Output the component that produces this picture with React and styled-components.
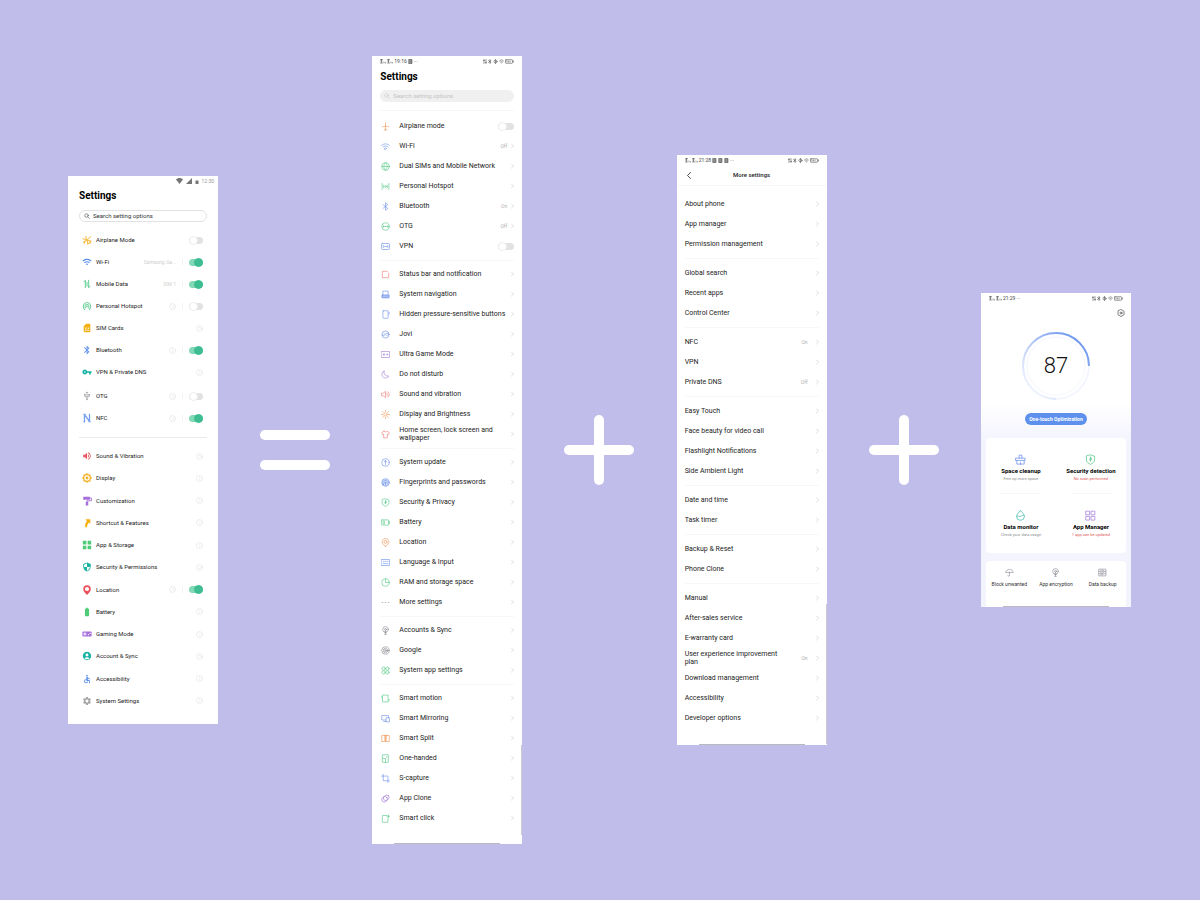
import React from "react";
import styled, { createGlobalStyle } from "styled-components";
import {
  MdWifi, MdSimCard, MdBluetooth, MdVpnKey, MdUsb, MdVolumeUp, MdSecurity,
  MdBatteryFull, MdVideogameAsset, MdAccountCircle, MdAccessible,
  MdWifiTethering,
} from "react-icons/md";

const GlobalStyle = createGlobalStyle`
  * { box-sizing: border-box; }
  body {
    margin: 0;
    background: #c0bdea;
    font-family: Roboto, "Liberation Sans", sans-serif;
    color: #1c1c1c;
  }
  ul { list-style: none; margin: 0; padding: 0; }
  h1, h2, p { margin: 0; }
`;

const c = {
  blue: "#6f94ea",
  green: "#5cc98a",
  red: "#ee7f78",
  orange: "#f0985c",
  purple: "#a683d8",
  grey: "#8f8f99",
  teal: "#45bfae",
};

/* ---------- line icons ---------- */

const shapes = {
  plane: <path d="M12 2v20M3 12.500c3-1.500 15-1.500 18 0M8.500 21h7" />,
  wifi: <path d="M1.500 9C7.500 3.500 16.500 3.500 22.500 9M5.500 13c4-3.500 9-3.500 13 0M9 17c2-1.500 4-1.500 6 0l-3 3z" />,
  globe: <><circle cx="12" cy="12" r="10" /><path d="M2 12h20M12 2c-6 6-6 14 0 20M12 2c6 6 6 14 0 20" /></>,
  hotspot: <><circle cx="12" cy="12" r="2" /><path d="M7.500 8c-1.500 2-1.500 6 0 8M16.500 8c1.500 2 1.500 6 0 8M3 4v16M21 4v16" /></>,
  bluetooth: <path d="M5.500 7L18 17l-6 5V2l6 5L5.500 17" />,
  otg: <><circle cx="12" cy="12" r="10" /><path d="M6 12h12M6 9.500v5M18 9.500v5" /></>,
  vpn: <><rect x="1.500" y="4" width="21" height="16" rx="2" /><path d="M6 9v6M18 9v6M9 12h6" /></>,
  status: <path d="M17 3.500H3.500v17h17V8" />,
  nav: <><path d="M5 13V3h14v10" /><rect x="2" y="13" width="20" height="8" rx="2" fill="currentColor" fillOpacity=".6" /></>,
  buttons: <><rect x="5" y="2" width="14" height="20" rx="1.500" /><path d="M21.500 6v5" /></>,
  jovi: <><circle cx="12" cy="12" r="9.500" /><path d="M3 14c5 2 8-1 9-3s6-3 9-1M8 10h1M15 14h2" /></>,
  game: <><rect x="1.500" y="4" width="21" height="16" /><path d="M8 9v6M6 12h3M14 12h1M17.500 10v4" /></>,
  moon: <path d="M8 3c-1 8 4 14 13 13-4 7-15 7-18-1C1.500 10 4 5 8 3z" />,
  sound: <path d="M2 8.500h4l6-5v17l-6-5H2zM15.500 8c2 2 2 6 0 8M19 5c4 4 4 10 0 14" />,
  sun: <><circle cx="12" cy="12" r="4.500" /><path d="M12 1v3M12 20v3M1 12h3M20 12h3M4 4l2.500 2.500M17.500 17.500L20 20M4 20l2.500-2.500M17.500 6.500L20 4" /></>,
  shirt: <path d="M8 3L2 7l2 5 3-1v10h10V11l3 1 2-5-6-4c-1 3-7 3-8 0z" />,
  update: <><circle cx="12" cy="12" r="10" /><path d="M12 17V7M8.500 10.500L12 7l3.500 3.500" /></>,
  finger: <><circle cx="12" cy="12" r="10" fill="currentColor" fillOpacity=".3" /><path d="M5 11c3-6 11-6 14 0M7 16c0-7 10-7 10 0M12 12v7M5 15l2 3" /></>,
  shield: <path d="M12 2l9 3v8c0 4-4 7.500-9 9.500-5-2-9-5.500-9-9.500V5zM12 7v4h-2l2 5v-4h2z" />,
  battery: <><rect x="1.500" y="5" width="18.500" height="14" rx="1" /><path d="M22.500 9v6M6 8v8M9 8v8" /></>,
  pin: <><path d="M12 22.500C5 18 3 14 3 10.500 3 5 7 1.500 12 1.500s9 3.500 9 9c0 3.500-2 7.500-9 12z" /><circle cx="12" cy="10.500" r="4" /></>,
  keyboard: <><rect x="1.500" y="4" width="21" height="16" /><path d="M6 9h2M11 9h2M16 9h2M6 15h12" /></>,
  pie: <><circle cx="12" cy="12" r="10" /><path d="M12 2v10h10" /></>,
  dots: <path d="M3 12h2M11 12h2M19 12h2" />,
  bulb: <><circle cx="12" cy="9" r="7.500" /><circle cx="12" cy="9" r="2.500" /><path d="M12 12v10M9 16.500h6M9.500 22h5" /></>,
  google: <><circle cx="12" cy="12" r="10" /><circle cx="12" cy="12" r="6" /><path d="M12 12h9M12 9a3 3 0 1 0 3 3" /></>,
  apps: <><circle cx="7" cy="7" r="4.500" /><circle cx="17" cy="7" r="4.500" /><circle cx="7" cy="17" r="4.500" /><circle cx="17" cy="17" r="4.500" /></>,
  motion: <path d="M5 3h14v18H5zM2.500 6v4M21.500 14v4" />,
  mirror: <><path d="M13 16H2V4h18v6" /><rect x="14.500" y="10" width="8" height="11" /><path d="M7 20h6" /></>,
  split: <path d="M9 4H2v16h7zM15 4h7v16h-7zM12 3v18M9 4h6" />,
  onehand: <path d="M4.500 2h15v20h-15zM4.500 12H12v10M14 8h2" />,
  crop: <path d="M6 1v17h17M1 5.500h17.500V23" />,
  clone: <><ellipse cx="9.500" cy="14" rx="8" ry="7" transform="rotate(-40 9.500 14)" /><ellipse cx="14" cy="10" rx="8.500" ry="6.500" transform="rotate(-40 14 10)" /></>,
  click: <path d="M16 4H3.500v18h15V10M16 6h7M20 3v6" />,
  brush: <><path d="M9 9V2.500h6V9M2 9h20v5H2zM4 14v8h16v-8M12 18v4" /></>,
  drop: <><path d="M12 1.500c5 5 8.500 8.500 8.500 12.500a8.500 8.500 0 0 1-17 0C3.500 10 7 6.500 12 1.500z" /><path d="M4 14c3-3 5 2 8 0s5-3 8-1" /></>,
  grid: <path d="M2.500 2.500h7.500v8H2.500zM14 2.500h7.500v8H14zM2.500 14h7.500v8H2.500zM14 14h7.500v8H14z" />,
  umbrella: <path d="M2 11c1-10 19-10 20 0zM12 11v9c0 3-4 3-4 0" />,
  backup: <path d="M3 3h18v18H3zM3 9h18M3 15h18M7 6h8M7 12l4 2 6-4M7 18h6" />,
  gear: <><path d="M12 1.500l9 5.250v10.500L12 22.500l-9-5.250V6.750z" /><circle cx="12" cy="12" r="3" /></>,
  search: <><circle cx="10" cy="10" r="7" /><path d="M15.500 15.500L22 22" /></>,
};

const Svg = styled.svg`
  display: block;
  flex: none;
  fill: none;
  stroke: currentColor;
  stroke-linecap: round;
  stroke-linejoin: round;
`;

const LineIcon = ({ name, color, size = 9, weight = 1.7 }) => (
  <Svg width={size} height={size} viewBox="0 0 24 24" color={color} strokeWidth={weight} aria-hidden="true">
    {shapes[name]}
  </Svg>
);

/* ---------- filled icons that the package lacks ---------- */

const Solid = ({ color, children }) => (
  <Svg width="10" height="10" viewBox="0 0 24 24" color={color} strokeWidth="2.200" aria-hidden="true">
    {children}
  </Svg>
);

const AirplaneSolid = ({ color }) => (
  <Solid color={color}>
    <path d="M9 3l2 7M2 9l8 2M3 17l8-4 10-9M8 14l-3 7M13 12l1 10M13 12l9 3-4 1 3 4-4-1-3 3" />
  </Solid>
);
const DataSolid = ({ color }) => (
  <Solid color={color}><path d="M8 21V3L4.500 7M16 3v18l3.500-4M12 8v9" /></Solid>
);
const NfcSolid = ({ color }) => (
  <Solid color={color}><path strokeWidth="3" d="M6 21V4l12 16V3" /><path strokeWidth="1.500" d="M3 3h6M15 21h6M3 21h3" /></Solid>
);
const SunSolid = ({ color }) => (
  <Solid color={color}>
    <path fill="currentColor" stroke="none" fillRule="evenodd" d="M12 0l3.500 3.200 4.800.5.500 4.800L24 12l-3.200 3.500-.5 4.800-4.800.5L12 24l-3.500-3.200-4.800-.5-.5-4.800L0 12l3.200-3.500.5-4.800 4.800-.5zM12 5.500a6.500 6.500 0 1 0 0 13 6.500 6.500 0 0 0 0-13z" />
    <circle cx="12" cy="12" r="3.500" fill="currentColor" stroke="none" />
  </Solid>
);
const RollerSolid = ({ color }) => (
  <Solid color={color}>
    <path fill="currentColor" stroke="none" d="M3 2h16v7H3zM9 14h6v9H9z" /><path d="M19 5h3.500v6.500H12V15" />
  </Solid>
);
const ShortcutSolid = ({ color }) => (
  <Solid color={color}>
    <path fill="currentColor" stroke="none" d="M8 3h12v11l-3.500-3.500C13 14 12.500 18 12 22H8c-2-6 1-11 4-14z" />
  </Solid>
);
const SquaresSolid = ({ color }) => (
  <Solid color={color}>
    <path fill="currentColor" stroke="none" d="M2 2h8.500v8.500H2zM13.500 2H22v8.500h-8.500zM2 13.500h8.500V22H2zM13.500 13.500H22V22h-8.500z" />
  </Solid>
);
const PlaceSolid = ({ color }) => (
  <Solid color={color}>
    <circle cx="12" cy="9.500" r="7" strokeWidth="4" /><path fill="currentColor" stroke="none" d="M5 16h14l-7 8z" />
  </Solid>
);
const GearSolid = ({ color }) => (
  <Solid color={color}>
    <path fill="currentColor" stroke="none" fillRule="evenodd" d="M19.140 12.940c.04-.3.06-.61.06-.94 0-.32-.02-.64-.07-.94l2.030-1.580c.18-.14.23-.41.12-.61l-1.920-3.320c-.12-.22-.37-.29-.59-.22l-2.390.96c-.5-.38-1.030-.7-1.620-.94l-.36-2.540c-.04-.24-.24-.41-.48-.41h-3.840c-.24 0-.43.17-.47.41l-.36 2.540c-.59.24-1.130.57-1.620.94l-2.390-.96c-.22-.08-.47 0-.59.22L2.740 8.870c-.12.21-.08.47.12.61l2.030 1.580c-.05.3-.09.63-.09.94s.02.64.07.94l-2.030 1.580c-.18.14-.23.41-.12.61l1.920 3.320c.12.22.37.29.59.22l2.390-.96c.5.38 1.030.7 1.620.94l.36 2.540c.05.24.24.41.48.41h3.840c.24 0 .44-.17.47-.41l.36-2.540c.59-.24 1.130-.56 1.620-.94l2.390.96c.22.08.47 0 .59-.22l1.920-3.320c.12-.22.07-.47-.12-.61l-2.010-1.580zM12 15.600c-1.980 0-3.600-1.620-3.600-3.600s1.620-3.600 3.600-3.600 3.600 1.620 3.600 3.600-1.620 3.600-3.600 3.600z" />
  </Solid>
);

/* ---------- page ---------- */

const Board = styled.main`
  min-height: 100vh;
  display: flex;
  align-items: center;
  justify-content: space-between;
  padding: 56px 69px 56px 68px;
`;

const Phone = styled.section`
  position: relative;
  flex: none;
  display: flex;
  flex-direction: column;
  width: 150px;
  min-height: ${(p) => p.$min || "auto"};
  padding-bottom: ${(p) => p.$bottom || "0"};
  background: ${(p) => p.$background || "#fff"};
`;

const HomeBar = styled.span`
  position: absolute;
  left: 22px;
  right: 22px;
  bottom: 0;
  height: 1px;
  background: #b9b9bf;
`;

const ScrollBar = styled.span`
  position: absolute;
  right: 0;
  bottom: ${(p) => p.$bottom};
  width: 1px;
  height: ${(p) => p.$length};
  background: #c9c9cf;
`;

const Sign = styled.div`
  flex: none;
  width: 70px;
  height: 70px;
  display: grid;
  align-content: center;
  gap: 20px;
`;

const Bar = styled.span`
  grid-column: 1;
  grid-row: ${(p) => p.$row || "auto"};
  height: 10px;
  border-radius: 5px;
  background: #fff;
  transform: ${(p) => (p.$upright ? "rotate(90deg)" : "none")};
`;

const Equals = () => (
  <Sign role="img" aria-label="equals"><Bar /><Bar /></Sign>
);
const Plus = () => (
  <Sign role="img" aria-label="plus"><Bar $row="1" /><Bar $row="1" $upright /></Sign>
);

/* ---------- status bar ---------- */

const StatusBar = styled.header`
  display: flex;
  align-items: center;
  justify-content: ${(p) => (p.$end ? "flex-end" : "space-between")};
  height: 10px;
  padding: 0 ${(p) => (p.$end ? "4px" : "8px")};
  font-size: 5px;
  line-height: 10px;
  color: ${(p) => (p.$end ? "#999" : "#444")};
`;

const StatusGroup = styled.span`
  display: flex;
  align-items: center;
  gap: ${(p) => p.$gap || "1px"};
`;

const Signal = () => (
  <Svg width="6" height="5" viewBox="0 0 12 10" strokeWidth="1.100">
    <path d="M1 1h4M1 4h3M3 1v6M1 8h4M8 6v2M11 7v1" />
  </Svg>
);
const Glyph = ({ children, width = 5 }) => (
  <Svg width={width} height="5" viewBox={`0 0 ${width * 2} 10`} strokeWidth="1.100">{children}</Svg>
);
const Block = () => <Glyph><path fill="currentColor" fillOpacity=".6" d="M2 1h6v8H2z" /></Glyph>;
const PhoneGlyphs = () => (
  <StatusGroup>
    <Glyph width={4}><path d="M2 1v8M6 1v8M1 3h2M5 7h2" /></Glyph>
    <Glyph width={4}><path d="M1 3l5 4-2 2V1l2 2-5 4" /></Glyph>
    <Glyph><circle cx="5" cy="5" r="3" /><path d="M5 1v8" /></Glyph>
    <Glyph><path d="M1 4c3-3 5-3 8 0M3 6c2-1 2-1 4 0M5 8v0" /></Glyph>
    <Glyph width={9}><rect x="1" y="1.500" width="14" height="7" rx="1" /><path d="M4 4v2M7 4v2M10 4v2M17 4v2" /></Glyph>
  </StatusGroup>
);

const Status = ({ time, blocks = 0 }) => (
  <StatusBar>
    <StatusGroup>
      <Signal /><Signal />
      <span>{time}</span>
      {Array.from({ length: blocks }, (_, i) => <Block key={i} />)}
      <span>···</span>
    </StatusGroup>
    <PhoneGlyphs />
  </StatusBar>
);

/* ---------- headings and search ---------- */

const Title = styled.h1`
  padding: 0 ${(p) => p.$side};
  font-size: 10px;
  font-weight: 700;
  line-height: ${(p) => p.$line};
  color: #000;
`;

const SearchBox = styled.label`
  display: flex;
  align-items: center;
  gap: 3px;
  height: 12px;
  margin: ${(p) => p.$margin};
  padding: 0 ${(p) => (p.$filled ? "3px" : "4px")};
  border: 1px solid ${(p) => (p.$filled ? "#f0f0f0" : "#e2e2e2")};
  border-radius: 6px;
  background: ${(p) => (p.$filled ? "#f0f0f0" : "#fff")};
  color: ${(p) => (p.$filled ? "#c4c4c4" : "#333")};
`;

const SearchInput = styled.input`
  flex: 1;
  min-width: 0;
  padding: 0;
  border: 0;
  outline: 0;
  background: none;
  font: 6px/8px Roboto, "Liberation Sans", sans-serif;
  color: inherit;
  &::placeholder { color: inherit; opacity: 1; }
`;

const Search = ({ filled, margin }) => (
  <SearchBox $filled={filled} $margin={margin}>
    <LineIcon name="search" size={6} weight={2} />
    <SearchInput type="search" placeholder="Search setting options" aria-label="Search setting options" />
  </SearchBox>
);

/* ---------- shared controls ---------- */

const Switch = styled.input.attrs({ type: "checkbox", role: "switch" })`
  appearance: none;
  flex: none;
  display: flex;
  align-items: center;
  width: ${(p) => (p.$wide ? "16px" : "14px")};
  height: 7px;
  margin: 0;
  border-radius: 4px;
  background: #e2e2e2;
  &::before {
    content: "";
    width: 7px;
    height: 7px;
    border: 1px solid #ececec;
    border-radius: 50%;
    background: #fff;
  }
  &:checked { background: #83d8b8; justify-content: flex-end; }
  &:checked::before { background: #3fbd92; border-color: #3fbd92; }
`;

const Chevron = ({ color = "#cfcfcf" }) => (
  <Svg width="3" height="6" viewBox="0 0 6 12" color={color} strokeWidth="1.400" aria-hidden="true">
    <path d="M1 2l4 4-4 4" />
  </Svg>
);

const Rule = styled.div`
  height: ${(p) => p.$height};
  margin: 0 ${(p) => p.$side};
  display: flex;
  align-items: center;
  &::before { content: ""; flex: 1; height: 1px; background: ${(p) => p.$color || "#f7f7f7"}; }
`;

/* ---------- first phone ---------- */

const FirstList = styled.ul`
  padding: ${(p) => p.$padding};
  ${(p) => p.$fill && "flex: 1; display: flex; flex-direction: column; justify-content: space-between;"}
`;

const FirstRow = styled.li`
  display: flex;
  align-items: center;
  height: 22px;
  margin-top: ${(p) => (p.$spaced ? "2px" : "0")};
`;

const FirstLabel = styled.a`
  flex: 1;
  display: grid;
  grid-template-columns: 10px 1fr;
  align-items: center;
  gap: 4px;
  font-size: 6px;
  line-height: 8px;
  color: inherit;
  text-decoration: none;
  white-space: nowrap;
`;

const FirstTail = styled.span`
  display: flex;
  align-items: center;
  gap: 6px;
`;

const Value = styled.span`
  font-size: 5px;
  line-height: 8px;
  color: ${(p) => p.$color || "#b0b0b0"};
`;

const Tick = styled.span`
  width: 1px;
  height: 6px;
  background: #f2f2f2;
`;

const Go = () => (
  <Svg width="7" height="7" viewBox="0 0 14 14" color="#dedede" strokeWidth="1.100" aria-hidden="true">
    <circle cx="7" cy="7" r="6" /><path d="M6 4l3 3-3 3" />
  </Svg>
);

const firstTop = [
  { icon: AirplaneSolid, color: "#f6b32c", label: "Airplane Mode", on: false },
  { icon: MdWifi, color: "#5c8fee", label: "Wi-Fi", value: "Samsung Ga...", on: true },
  { icon: DataSolid, color: "#56c98a", label: "Mobile Data", value: "SIM 1", on: true },
  { icon: MdWifiTethering, color: "#56c98a", label: "Personal Hotspot", go: true, on: false },
  { icon: MdSimCard, color: "#f6b012", label: "SIM Cards" },
  { icon: MdBluetooth, color: "#5c8fee", label: "Bluetooth", go: true, on: true },
  { icon: MdVpnKey, color: "#16b3a4", label: "VPN & Private DNS" },
  { icon: MdUsb, color: "#a5a5a5", label: "OTG", go: true, on: false, spaced: true },
  { icon: NfcSolid, color: "#6f9cee", label: "NFC", go: true, on: true },
];

const firstBottom = [
  { icon: MdVolumeUp, color: "#ec5560", label: "Sound & Vibration" },
  { icon: SunSolid, color: "#f6b32c", label: "Display" },
  { icon: RollerSolid, color: "#a56fdc", label: "Customization" },
  { icon: ShortcutSolid, color: "#f6b012", label: "Shortcut & Features" },
  { icon: SquaresSolid, color: "#4fcb78", label: "App & Storage" },
  { icon: MdSecurity, color: "#16b3a4", label: "Security & Permissions" },
  { icon: PlaceSolid, color: "#ec4f5c", label: "Location", go: true, on: true },
  { icon: MdBatteryFull, color: "#4fcb78", label: "Battery" },
  { icon: MdVideogameAsset, color: "#a56fdc", label: "Gaming Mode" },
  { icon: MdAccountCircle, color: "#16b3a4", label: "Account & Sync" },
  { icon: MdAccessible, color: "#5c8fee", label: "Accessibility" },
  { icon: GearSolid, color: "#a5a5a5", label: "System Settings" },
];

const FirstItem = ({ icon: Icon, color, label, value, go, on, spaced }) => {
  const hasSwitch = on !== undefined;
  return (
    <FirstRow $spaced={spaced}>
      <FirstLabel href="#"><Icon color={color} size={10} />{label}</FirstLabel>
      <FirstTail>
        {value && <Value $color="#cfcfcf">{value}</Value>}
        {(go || !hasSwitch) && <Go />}
        {(go || value) && <Tick />}
        {hasSwitch && <Switch defaultChecked={on} aria-label={label} />}
      </FirstTail>
    </FirstRow>
  );
};

const FirstPhone = () => (
  <Phone $min="548px" $bottom="12px">
    <StatusBar $end>
      <StatusGroup $gap="3px">
        <Svg width="7" height="6" viewBox="0 0 14 12"><path fill="#757575" stroke="none" d="M0 3C4-1 10-1 14 3L7 12z" /></Svg>
        <Svg width="6" height="6" viewBox="0 0 12 12"><path fill="#757575" stroke="none" d="M12 0v12H0z" /></Svg>
        <Svg width="4" height="6" viewBox="0 0 8 12"><path fill="#757575" stroke="none" d="M1 5h6v7H1z" /></Svg>
        <span>12:30</span>
      </StatusGroup>
    </StatusBar>
    <Title $side="11px" $line="20px">Settings</Title>
    <Search margin="4px 11px 7px" />
    <FirstList $padding="0 15px 0 14px">
      {firstTop.map((r) => <FirstItem key={r.label} {...r} />)}
    </FirstList>
    <Rule $height="16px" $side="11px" $color="#e9e9e9" />
    <FirstList $fill $padding="0 15px 0 14px">
      {firstBottom.map((r) => <FirstItem key={r.label} {...r} />)}
    </FirstList>
  </Phone>
);

/* ---------- second and third phones ---------- */

const ListRow = styled.li`
  display: flex;
  align-items: center;
  height: 20px;
  padding: 0 8px;
`;

const ListLink = styled.a`
  flex: 1;
  display: flex;
  align-items: center;
  font-size: 7px;
  line-height: 8px;
  color: inherit;
  text-decoration: none;
`;

const IconSlot = styled.span`
  flex: none;
  width: 19px;
  padding-left: 1px;
`;

const ListText = styled.span`
  flex: 1;
  white-space: ${(p) => (p.$wrap ? "pre-line" : "nowrap")};
`;

const ListTail = styled.span`
  flex: none;
  display: flex;
  align-items: center;
  gap: ${(p) => p.$gap};
`;

const ListItem = ({ icon, color, label, value, on, tailGap = "4px" }) => {
  const hasSwitch = on !== undefined;
  return (
    <ListRow>
      <ListLink href="#">
        {icon && <IconSlot><LineIcon name={icon} color={c[color]} /></IconSlot>}
        <ListText $wrap={label.includes("\n")}>{label}</ListText>
        {!hasSwitch && (
          <ListTail $gap={tailGap}>
            {value && <Value>{value}</Value>}
            <Chevron />
          </ListTail>
        )}
      </ListLink>
      {hasSwitch && <Switch $wide defaultChecked={on} aria-label={label} />}
    </ListRow>
  );
};

const Groups = ({ groups, gap, tailGap }) =>
  groups.map((rows, i) => (
    <React.Fragment key={rows[0].label}>
      {i > 0 && <Rule $height={gap} $side="8px" />}
      <ul>{rows.map((r) => <ListItem key={r.label} tailGap={tailGap} {...r} />)}</ul>
    </React.Fragment>
  ));

const row = (icon, color, label, extra) => ({ icon, color, label, ...extra });

const secondGroups = [
  [
    row("plane", "orange", "Airplane mode", { on: false }),
    row("wifi", "blue", "Wi-Fi", { value: "Off" }),
    row("globe", "green", "Dual SIMs and Mobile Network"),
    row("hotspot", "green", "Personal Hotspot"),
    row("bluetooth", "blue", "Bluetooth", { value: "On" }),
    row("otg", "green", "OTG", { value: "Off" }),
    row("vpn", "blue", "VPN", { on: false }),
  ],
  [
    row("status", "red", "Status bar and notification"),
    row("nav", "blue", "System navigation"),
    row("buttons", "blue", "Hidden pressure-sensitive buttons"),
    row("jovi", "blue", "Jovi"),
    row("game", "purple", "Ultra Game Mode"),
    row("moon", "purple", "Do not disturb"),
    row("sound", "red", "Sound and vibration"),
    row("sun", "orange", "Display and Brightness"),
    row("shirt", "red", "Home screen, lock screen and\nwallpaper"),
  ],
  [
    row("update", "blue", "System update"),
    row("finger", "blue", "Fingerprints and passwords"),
    row("shield", "green", "Security & Privacy"),
    row("battery", "green", "Battery"),
    row("pin", "orange", "Location"),
    row("keyboard", "blue", "Language & Input"),
    row("pie", "green", "RAM and storage space"),
    row("dots", "grey", "More settings"),
  ],
  [
    row("bulb", "grey", "Accounts & Sync"),
    row("google", "grey", "Google"),
    row("apps", "green", "System app settings"),
  ],
  [
    row("motion", "green", "Smart motion"),
    row("mirror", "blue", "Smart Mirroring"),
    row("split", "orange", "Smart Split"),
    row("onehand", "green", "One-handed"),
    row("crop", "blue", "S-capture"),
    row("clone", "purple", "App Clone"),
    row("click", "green", "Smart click"),
  ],
];

const SecondPhone = () => (
  <Phone $bottom="16px">
    <Status time="19:16" blocks={1} />
    <Title $side="8px" $line="22px">Settings</Title>
    <Search filled margin="2px 8px 3px" />
    <Rule $height="11px" $side="8px" />
    <Groups groups={secondGroups} gap="8px" />
    <ScrollBar $bottom="9px" $length="90px" />
    <HomeBar />
  </Phone>
);

const thirdGroups = [
  ["About phone", "App manager", "Permission management"],
  ["Global search", "Recent apps", "Control Center"],
  [["NFC", "On"], "VPN", ["Private DNS", "Off"]],
  ["Easy Touch", "Face beauty for video call", "Flashlight Notifications", "Side Ambient Light"],
  ["Date and time", "Task timer"],
  ["Backup & Reset", "Phone Clone"],
  ["Manual", "After-sales service", "E-warranty card", ["User experience improvement\nplan", "On"],
    "Download management", "Accessibility", "Developer options"],
].map((group) => group.map((r) => (Array.isArray(r) ? { label: r[0], value: r[1] } : { label: r })));

const NavBar = styled.div`
  display: grid;
  grid-template-columns: 20px 1fr 20px;
  align-items: center;
  height: 21px;
  margin-bottom: 8px;
  padding: 0 2px;
  border-bottom: 1px solid #f6f6f6;
`;

const BackButton = styled.button`
  display: grid;
  place-items: center;
  height: 20px;
  padding: 0;
  border: 0;
  background: none;
  color: #222;
`;

const NavTitle = styled.h1`
  font-size: 6px;
  font-weight: 500;
  line-height: 8px;
  text-align: center;
`;

const ThirdPhone = () => (
  <Phone $bottom="17px">
    <Status time="21:28" blocks={3} />
    <NavBar>
      <BackButton type="button" aria-label="Back">
        <Svg width="4" height="7" viewBox="0 0 8 14" strokeWidth="1.600"><path d="M7 1L1 7l6 6" /></Svg>
      </BackButton>
      <NavTitle>More settings</NavTitle>
    </NavBar>
    <Groups groups={thirdGroups} gap="9px" tailGap="8px" />
    <ScrollBar $bottom="1px" $length="140px" />
    <HomeBar />
  </Phone>
);

/* ---------- fourth phone ---------- */

const GearButton = styled.button`
  align-self: flex-end;
  display: grid;
  place-items: center;
  width: 20px;
  height: 20px;
  padding: 0;
  border: 0;
  background: none;
  color: #444;
`;

const Gauge = styled.div`
  display: grid;
  place-items: center;
  margin-top: 8px;
  > * { grid-area: 1 / 1; }
`;

const Score = styled.strong`
  font: 300 22px/28px "Liberation Sans Narrow", Roboto, sans-serif;
  color: #111;
`;

const Optimise = styled.button`
  align-self: center;
  height: 12px;
  margin: 12px 0 13px;
  padding: 0 4px;
  border: 0;
  border-radius: 6px;
  background: #5e90ee;
  font: 700 5px/12px Roboto, "Liberation Sans", sans-serif;
  color: #fff;
`;

const ToolCard = styled.div`
  display: grid;
  grid-template-columns: 1fr 1fr;
  grid-auto-rows: 56px;
  margin: 0 5px 8px;
  padding-bottom: 3px;
  border-radius: 4px;
  background: #fff;
`;

const Tool = styled.a`
  display: flex;
  flex-direction: column;
  align-items: center;
  padding-top: 16px;
  color: inherit;
  text-decoration: none;
  white-space: nowrap;
`;

const ToolName = styled.h2`
  margin-top: 2px;
  font-size: 6px;
  font-weight: 700;
  line-height: 8px;
  color: #000;
`;

const ToolNote = styled.p`
  font-size: 4px;
  line-height: 8px;
  color: ${(p) => (p.$alert ? "#e05a5a" : "#909090")};
`;

const ToolLine = styled.span`
  width: 40px;
  height: 1px;
  margin-top: auto;
  background: #f6f6f8;
`;

const LinkCard = styled.nav`
  display: grid;
  grid-template-columns: repeat(3, 1fr);
  height: 46px;
  margin: 0 5px;
  padding-top: 7px;
  border-radius: 4px 4px 0 0;
  background: #fff;
`;

const QuickLink = styled.a`
  display: flex;
  flex-direction: column;
  align-items: center;
  gap: 3px;
  font-size: 5px;
  line-height: 8px;
  color: #333;
  text-decoration: none;
  white-space: nowrap;
`;

const tools = [
  ["brush", c.blue, "Space cleanup", "Free up more space"],
  ["shield", c.green, "Security detection", "No scan performed", true],
  ["drop", c.teal, "Data monitor", "Check your data usage"],
  ["grid", c.purple, "App Manager", "1 app can be updated", true],
];

const quickLinks = [
  ["umbrella", "Block unwanted"],
  ["bulb", "App encryption"],
  ["backup", "Data backup"],
];

const FourthPhone = () => (
  <Phone $background="linear-gradient(#fff 110px, #f3f4fe 150px)">
    <Status time="21:29" />
    <GearButton type="button" aria-label="Settings"><LineIcon name="gear" size={8} weight={2} /></GearButton>
    <Gauge>
      <svg width="70" height="70" viewBox="0 0 70 70" fill="none" aria-hidden="true">
        <defs>
          <linearGradient id="arc" x1="0" y1="1" x2="1" y2="0">
            <stop offset=".15" stopColor="#eef2fe" />
            <stop offset=".5" stopColor="#b3c7f7" />
            <stop offset="1" stopColor="#5585ea" />
          </linearGradient>
        </defs>
        <circle cx="35" cy="35" r="29" stroke="#f5f7fe" />
        <circle cx="35" cy="35" r="33" stroke="#f3f6fe" strokeWidth="2" />
        <path d="M35 68A33 33 0 1 1 68 35" stroke="url(#arc)" strokeWidth="2" />
      </svg>
      <Score>87</Score>
    </Gauge>
    <Optimise type="button">One-touch Optimization</Optimise>
    <ToolCard>
      {tools.map(([icon, color, name, note, alert], i) => (
        <Tool href="#" key={name}>
          <LineIcon name={icon} color={color} size={11} />
          <ToolName>{name}</ToolName>
          <ToolNote $alert={alert}>{note}</ToolNote>
          {i < 2 && <ToolLine />}
        </Tool>
      ))}
    </ToolCard>
    <LinkCard>
      {quickLinks.map(([icon, name]) => (
        <QuickLink href="#" key={name}>
          <LineIcon name={icon} color={c.grey} size={9} />
          {name}
        </QuickLink>
      ))}
    </LinkCard>
    <HomeBar />
  </Phone>
);

export default function App() {
  return (
    <>
      <GlobalStyle />
      <Board>
        <FirstPhone />
        <Equals />
        <SecondPhone />
        <Plus />
        <ThirdPhone />
        <Plus />
        <FourthPhone />
      </Board>
    </>
  );
}
